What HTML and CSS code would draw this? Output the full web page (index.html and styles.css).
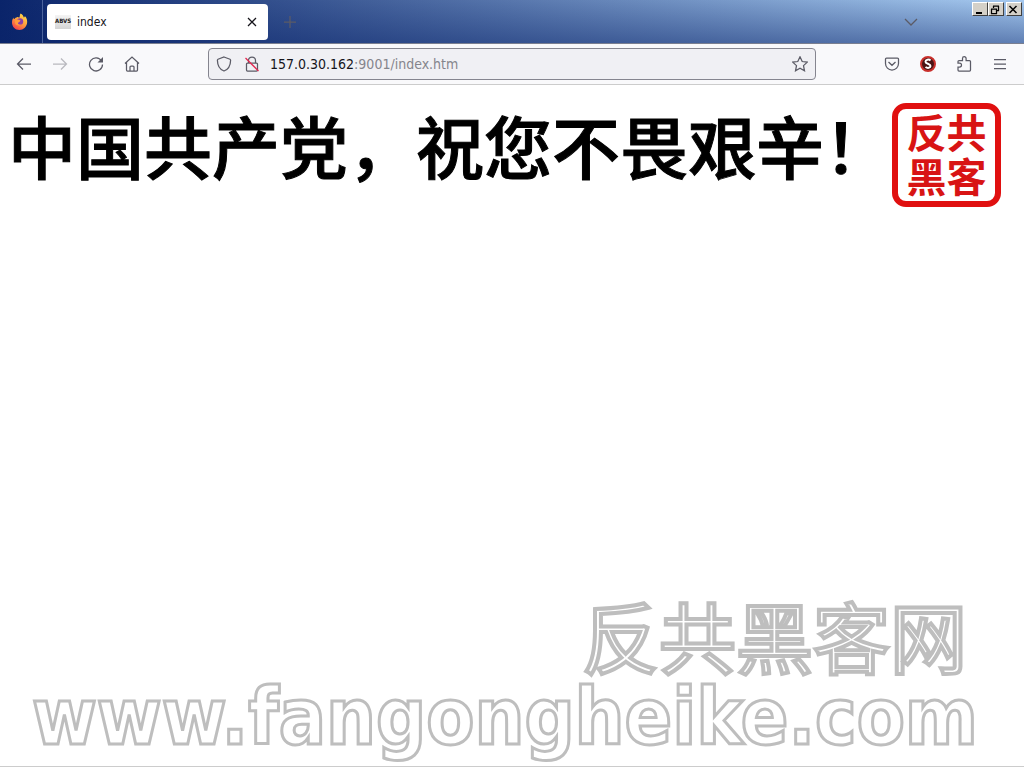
FILE: index.html
```html
<!DOCTYPE html>
<html lang="zh-CN">
<head>
  <meta charset="UTF-8">
  <title>index</title>
  <meta name="viewport" content="width=device-width, initial-scale=1.0">
  <link rel="stylesheet" href="styles.css">
</head>
<body>

  <!-- Tab strip -->
  <header class="tabstrip">
    <div class="brand">
      <svg width="18" height="18" viewBox="0 0 18 18" aria-hidden="true">
        <defs>
          <linearGradient id="flame" x1="0.8" y1="0" x2="0.2" y2="1">
            <stop offset="0" stop-color="#ffe24a"/>
            <stop offset="0.5" stop-color="#ff9a3c"/>
            <stop offset="1" stop-color="#f0384f"/>
          </linearGradient>
        </defs>
        <path fill="url(#flame)" d="M9.500 .5c2 1 3 2.500 3.300 4 .8 0 1-.8 1-1.500 2 2 2.700 4.500 2.300 7-.7 4-3.700 7-7.600 7-4.500 0-7.500-3.500-7.500-7.500C1 7.500 1.500 6 2.500 4.500c0 1 .3 1.500 1 1.500.6-1 1.500-1.500 3-2 .5 0 1 .5 2 .5.5-1.500.2-2.500 1-4z"/>
        <circle cx="9" cy="8.500" r="3.200" fill="#8a3fa8"/>
        <path fill="#ff9a3c" d="M4 7c2-1 4-.5 5.500.5C9 9 7 9 7 10.500c0 1 1.500 1.500 3 1-1 1.500-5 1.500-6-1.500z"/>
      </svg>
    </div>
    <div class="tab">
      <span class="favicon">ABVS</span>
      <span class="tab-title">index</span>
      <button class="icon-button tab-close" aria-label="Close tab">
        <svg width="10" height="10" viewBox="0 0 10 10"><path d="M1 1l8 8M9 1l-8 8"/></svg>
      </button>
    </div>
    <button class="icon-button new-tab" aria-label="New tab">
      <svg width="12" height="12" viewBox="0 0 12 12"><path d="M6 0v12M0 6h12"/></svg>
    </button>
    <button class="icon-button all-tabs" aria-label="List all tabs">
      <svg width="14" height="8" viewBox="0 0 14 8"><path d="M1 1l6 6 6-6"/></svg>
    </button>
    <div class="window-buttons">
      <button aria-label="Minimize"><svg width="12" height="11" viewBox="0 0 12 11"><path d="M3 9h6" stroke-width="2"/></svg></button>
      <button aria-label="Restore"><svg width="12" height="11" viewBox="0 0 12 11"><path d="M4 2h6M4.500 2v2M9.500 2v5M7 6.500h3M2 5h6M2.500 5v5M7.500 5v5M2 9.500h6"/></svg></button>
      <button class="close" aria-label="Close"><svg width="12" height="11" viewBox="0 0 12 11"><path d="M2.500 2l7 7M9.500 2l-7 7" stroke-width="1.500"/></svg></button>
    </div>
  </header>

  <!-- Navigation toolbar -->
  <nav class="toolbar">
    <div class="nav-buttons">
      <button class="icon-button" aria-label="Back">
        <svg width="16" height="16" viewBox="0 0 16 16"><path d="M15 8H1.500M7 2.500L1.500 8 7 13.500"/></svg>
      </button>
      <button class="icon-button" aria-label="Forward" disabled>
        <svg width="16" height="16" viewBox="0 0 16 16"><path d="M1 8h13.500M9 2.500L14.500 8 9 13.500"/></svg>
      </button>
      <button class="icon-button" aria-label="Reload">
        <svg width="16" height="16" viewBox="0 0 16 16"><path d="M13.500 5A6.500 6.500 0 1 0 14.500 8.500"/><path class="solid" d="M15 1v5.500H9.500z"/></svg>
      </button>
      <button class="icon-button" aria-label="Home">
        <svg width="16" height="16" viewBox="0 0 16 16"><path d="M1 7.500L8 1l7 6.500M2.500 6.500V14q0 1 1 1h9q1 0 1-1V6.500M6 15v-4q0-1 1-1h2q1 0 1 1v4"/></svg>
      </button>
    </div>
    <div class="urlbar">
      <svg width="16" height="16" viewBox="0 0 16 16"><path d="M8 1l6 2.200q.6.300.6 1C14.500 10 12 13.500 8 15 4 13.500 1.500 10 1.400 4.200q0-.7.600-1z"/></svg>
      <svg class="lock" width="16" height="16" viewBox="0 0 16 16"><path d="M4.500 7V4.500a3.500 3.500 0 0 1 7 0V7M3.500 7h9q1 0 1 1v6q0 1-1 1h-9q-1 0-1-1V8q0-1 1-1z"/><path class="strike" d="M1.500 2l13 13"/></svg>
      <a class="url" href="#"><b>157.0.30.162</b>:9001/index.htm</a>
      <button class="icon-button star" aria-label="Bookmark this page">
        <svg width="16" height="16" viewBox="0 0 16 16"><path d="M8 .8l2.200 4.700 5.100.6-3.800 3.500 1 5.200L8 12.300l-4.500 2.500 1-5.200L.7 6.100l5.100-.6z"/></svg>
      </button>
    </div>
    <div class="tools">
      <button class="icon-button" aria-label="Pocket">
        <svg width="16" height="16" viewBox="0 0 16 16"><path d="M2.500 2h11q1 0 1 1v4.500a6.500 6.500 0 0 1-13 0V3q0-1 1-1zM4.500 6L8 9.300 11.500 6"/></svg>
      </button>
      <button class="icon-button" aria-label="NoScript">
        <svg width="18" height="18" viewBox="0 0 18 18"><circle cx="9" cy="9" r="7" fill="#4a1414" stroke="#c9302c" stroke-width="2"/><path class="snake" d="M11.500 5.500C10 4 6.500 4.500 6.500 6.700c0 2.300 5 1.800 5 4.300 0 2-3 2.500-5 1"/></svg>
      </button>
      <button class="icon-button" aria-label="Extensions">
        <svg width="16" height="16" viewBox="0 0 16 16"><path d="M2 7V5.500q0-1 1-1h3.500V2.500a1.800 1.800 0 0 1 3.600 0v2h3.400q1 0 1 1v8.500q0 1-1 1H3q-1 0-1-1v-3h1.500a1.800 1.800 0 0 0 0-4z"/></svg>
      </button>
      <button class="icon-button" aria-label="Menu">
        <svg width="14" height="12" viewBox="0 0 14 12"><path d="M1 1.500h12M1 6h12M1 10.500h12"/></svg>
      </button>
    </div>
  </nav>

  <!-- Page content -->
  <main class="page">
    <div class="banner">
      <h1>中国共产党，祝您不畏艰辛！</h1>
      <div class="seal">反共<br>黑客</div>
    </div>
    <footer class="watermark">
      <p class="site-name">反共黑客网</p>
      <p class="site-url">www.fangongheike.com</p>
    </footer>
  </main>

</body>
</html>
```
FILE: styles.css
```css
* {
  box-sizing: border-box;
}
body {
  margin: 0;
  min-height: 100vh;
  display: flex;
  flex-direction: column;
  background: #fff;
  font-family: "DejaVu Sans Condensed", "Noto Sans", "Noto Sans CJK SC", sans-serif;
  overflow-x: hidden;
}
button {
  padding: 0;
  border: none;
  background: none;
}
svg {
  display: block;
  flex: none;
  fill: none;
  stroke: #5b5b66;
  stroke-width: 1.25;
}

/* Tab strip */
.tabstrip {
  display: flex;
  height: 44px;
  background:
    linear-gradient(rgba(10,36,106,0), rgba(10,36,106,0.45)),
    linear-gradient(90deg, #0a246a, #a6caf0);
  border-bottom: 1px solid #7a7f90;
}
.brand {
  width: 43px;
  display: flex;
  align-items: center;
  justify-content: center;
  padding-right: 2px;
  border-right: 1px solid #4b639c;
}
.brand svg {
  stroke: none;
}
.tab {
  display: flex;
  align-items: center;
  gap: 6px;
  width: 221px;
  height: 36px;
  margin: 4px;
  padding: 0 8px;
  background: #fff;
  border-radius: 4px;
}
.favicon {
  width: 16px;
  height: 14px;
  background: linear-gradient(#f4f4f4, #d4d4d4);
  color: #222;
  font: bold 6px/12px "DejaVu Sans Condensed", sans-serif;
  text-align: center;
}
.tab-title {
  flex: 1;
  font-size: 12px;
  color: #15141a;
}
.icon-button {
  display: flex;
  align-items: center;
  justify-content: center;
  width: 16px;
}
.tab-close svg {
  stroke: #15141a;
}
.new-tab {
  height: 44px;
  margin-left: 10px;
}
.all-tabs {
  height: 44px;
  margin-left: auto;
}
.window-buttons {
  display: flex;
  align-items: flex-start;
  margin: 2px 2px 0 53px;
}
.window-buttons button {
  width: 16px;
  height: 14px;
  background: #d4d0c8;
  border: 1px solid;
  border-color: #fff #404040 #404040 #fff;
}
.window-buttons .close {
  margin-left: 2px;
}
.window-buttons svg {
  stroke: #000;
}

/* Navigation toolbar */
.toolbar {
  display: flex;
  align-items: center;
  height: 41px;
  padding: 0 16px;
  background: #f9f9fb;
  border-bottom: 1px solid #ccc;
}
.nav-buttons,
.tools {
  display: flex;
  gap: 20px;
}
.icon-button:disabled {
  opacity: 0.4;
}
.solid {
  fill: #5b5b66;
  stroke: none;
}
.urlbar {
  flex: 1;
  display: flex;
  align-items: center;
  gap: 12px;
  height: 32px;
  margin: 0 68px;
  padding: 0 7px;
  background: #f0f0f4;
  border: 1px solid #85858f;
  border-radius: 4px;
}
.strike {
  stroke: #e22850;
}
.url {
  flex: 1;
  margin-left: -2px;
  font-size: 14px;
  color: #85858c;
  text-decoration: none;
}
.url b {
  font-weight: normal;
  color: #15141a;
}
.snake {
  stroke: #fff;
  stroke-width: 2;
}

/* Page content */
.page {
  flex: 1;
  display: flex;
  flex-direction: column;
  justify-content: space-between;
  margin-bottom: 1px;
  border-bottom: 1px solid #ccc;
  font-family: "Noto Sans CJK SC", sans-serif;
}
.banner {
  display: flex;
  justify-content: space-between;
  padding: 18px 23px 0 8px;
}
h1 {
  margin: 0;
  font-size: 68px;
  line-height: 84px;
  font-weight: 500;
  -webkit-text-stroke: 1px #000;
  white-space: nowrap;
}
.seal {
  width: 109px;
  height: 104px;
  flex: none;
  border: 6px solid #e01010;
  border-radius: 14px;
  color: #d81414;
  font-size: 40px;
  line-height: 44px;
  font-weight: bold;
  text-align: center;
}

/* Outlined watermark */
.watermark {
  padding: 0 48px 9px 32px;
  color: #fff;
  text-align: right;
  white-space: nowrap;
}
.watermark p {
  margin: 0;
}
.site-name {
  padding-right: 9px;
  font-size: 77px;
  line-height: 84px;
  font-weight: normal;
  -webkit-text-stroke: 4px #bebebe;
}
.site-url {
  font-family: "DejaVu Sans Condensed", "DejaVu Sans", sans-serif;
  font-size: 78px;
  line-height: 80px;
  font-weight: bold;
  -webkit-text-stroke: 3px #bebebe;
}
```
